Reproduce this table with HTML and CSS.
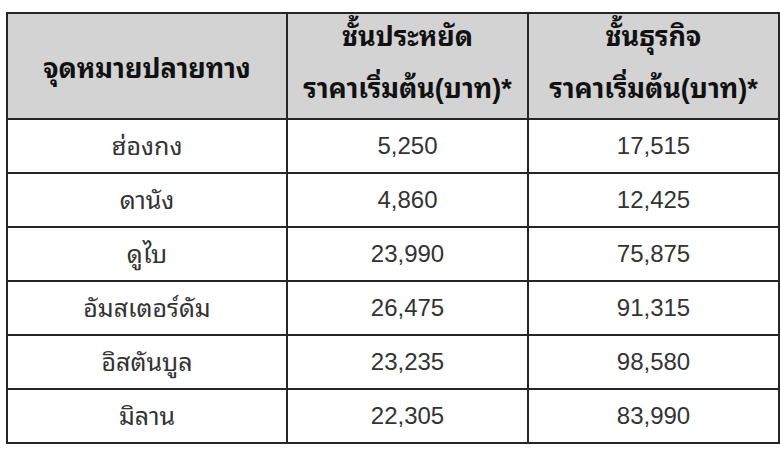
FILE: index.html
```html
<!DOCTYPE html>
<html lang="th">
<head>
<meta charset="utf-8">
<link rel="stylesheet" href="styles.css">
</head>
<body>
<table class="fares">
  <colgroup>
    <col class="c1"><col class="c2"><col class="c3">
  </colgroup>
  <thead>
    <tr>
      <th class="single">จุดหมายปลายทาง</th>
      <th><span class="l1">ชั้นประหยัด</span><span class="l2">ราคาเริ่มต้น(บาท)*</span></th>
      <th><span class="l1">ชั้นธุรกิจ</span><span class="l2">ราคาเริ่มต้น(บาท)*</span></th>
    </tr>
  </thead>
  <tbody>
    <tr><td class="dest">ฮ่องกง</td><td>5,250</td><td>17,515</td></tr>
    <tr><td class="dest">ดานัง</td><td>4,860</td><td>12,425</td></tr>
    <tr><td class="dest">ดูไบ</td><td>23,990</td><td>75,875</td></tr>
    <tr><td class="dest">อัมสเตอร์ดัม</td><td>26,475</td><td>91,315</td></tr>
    <tr><td class="dest">อิสตันบูล</td><td>23,235</td><td>98,580</td></tr>
    <tr><td class="dest">มิลาน</td><td>22,305</td><td>83,990</td></tr>
  </tbody>
</table>
</body>
</html>
```
FILE: styles.css
```css
html, body {
  margin: 0;
  padding: 0;
  background: #ffffff;
}
body {
  padding: 12px 0 0 6px;
}
.fares {
  border-collapse: collapse;
  width: 772px;
  table-layout: fixed;
  font-family: "Liberation Sans", "Noto Sans Thai Looped", "Loma", sans-serif;
  font-size: 24px;
  color: #333333;
}
.c1 { width: 280px; }
.c2 { width: 241px; }
.c3 { width: 251px; }
.fares th, .fares td {
  border: 2px solid #262626;
  text-align: center;
  padding: 0;
}
.fares th {
  background: #d3d3d3;
  color: #111111;
  font-weight: bold;
  font-size: 27px;
  height: 104px;
  vertical-align: top;
}
.fares th.single {
  vertical-align: middle;
  padding-bottom: 2px;
  height: 102px;
}
.fares td {
  height: 52px;
}
.fares td.dest {
  font-size: 25px;
  padding-bottom: 4px;
  height: 48px;
}
.l1, .l2 {
  display: block;
  line-height: 50px;
}
.l1 {
  margin-top: -2px;
}
.l2 {
  margin-top: 2px;
}
```
